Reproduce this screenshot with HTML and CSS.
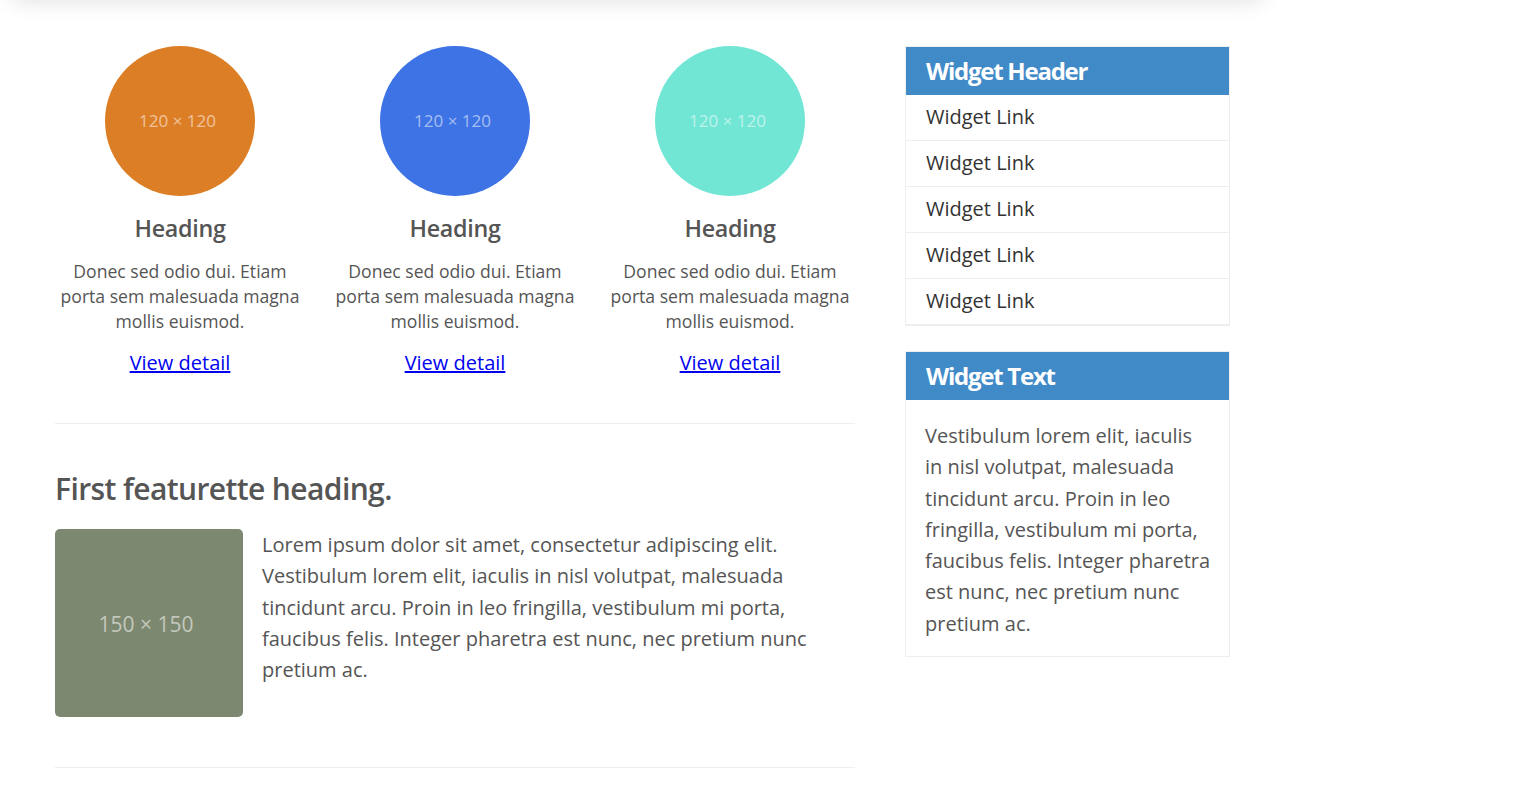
FILE: index.html
```html
<!DOCTYPE html>
<html>
<head>
<meta charset="utf-8">
<link rel="stylesheet" href="styles.css">
</head>
<body>
<div class="topbar"></div>
<div class="page">
  <main class="main">
    <div class="cols">
      <div class="col">
        <div class="circle orange">120 × 120</div>
        <h2 class="col-title">Heading</h2>
        <p class="col-text">Donec sed odio dui. Etiam porta sem malesuada magna mollis euismod.</p>
        <a class="col-link" href="#">View detail</a>
      </div>
      <div class="col">
        <div class="circle blue">120 × 120</div>
        <h2 class="col-title">Heading</h2>
        <p class="col-text">Donec sed odio dui. Etiam porta sem malesuada magna mollis euismod.</p>
        <a class="col-link" href="#">View detail</a>
      </div>
      <div class="col">
        <div class="circle teal">120 × 120</div>
        <h2 class="col-title">Heading</h2>
        <p class="col-text">Donec sed odio dui. Etiam porta sem malesuada magna mollis euismod.</p>
        <a class="col-link" href="#">View detail</a>
      </div>
    </div>
    <hr class="divider">
    <section class="featurette">
      <h2 class="feat-title">First featurette heading.</h2>
      <div class="feat-body">
        <div class="square">150 × 150</div>
        <p class="feat-text">Lorem ipsum dolor sit amet, consectetur adipiscing elit. Vestibulum lorem elit, iaculis in nisl volutpat, malesuada tincidunt arcu. Proin in leo fringilla, vestibulum mi porta, faucibus felis. Integer pharetra est nunc, nec pretium nunc pretium ac.</p>
      </div>
    </section>
    <hr class="divider">
  </main>
  <aside class="sidebar">
    <div class="widget">
      <h3 class="widget-head">Widget Header</h3>
      <ul class="widget-list">
        <li><a href="#">Widget Link</a></li>
        <li><a href="#">Widget Link</a></li>
        <li><a href="#">Widget Link</a></li>
        <li><a href="#">Widget Link</a></li>
        <li><a href="#">Widget Link</a></li>
      </ul>
    </div>
    <div class="widget">
      <h3 class="widget-head">Widget Text</h3>
      <p class="widget-text">Vestibulum lorem elit, iaculis in nisl volutpat, malesuada tincidunt arcu. Proin in leo fringilla, vestibulum mi porta, faucibus felis. Integer pharetra est nunc, nec pretium nunc pretium ac.</p>
    </div>
  </aside>
</div>
</body>
</html>
```

FILE: styles.css
```css
* { box-sizing: border-box; }
html, body { margin: 0; padding: 0; background: #fff; }
body {
  font-family: "Open Sans", "Noto Sans", sans-serif;
  color: #555;
  overflow: hidden;
}
.topbar {
  width: 1250px;
  margin-left: 12px;
  height: 20px;
  margin-top: -20px;
  box-shadow: 0 0 22px rgba(0, 0, 0, 0.14);
}
.page {
  display: flex;
  gap: 50px;
  padding: 46px 0 0 55px;
}
.main {
  width: 800px;
  flex: none;
}
.cols {
  display: flex;
  margin: 0 -12.5px;
}
.col {
  width: 275px;
  padding: 0 12.5px;
  display: flex;
  flex-direction: column;
  align-items: center;
  text-align: center;
}
.circle {
  width: 150px;
  height: 150px;
  border-radius: 50%;
  display: flex;
  align-items: center;
  justify-content: center;
  padding: 0 5px 2px 0;
  font-size: 17px;
  color: rgba(255, 255, 255, 0.55);
}
.orange { background: #dc7e26; }
.blue { background: #3d73e4; }
.teal { background: #72e6d5; }
.col-title {
  margin: 16px 0 0;
  font-size: 23.3px;
  font-weight: 600;
  line-height: 32px;
  color: #555;
  letter-spacing: -0.3px;
}
.col-text {
  margin: 15px 0 0;
  font-size: 17.6px;
  line-height: 25px;
  color: #555;
}
.col-link {
  margin-top: 16px;
  font-size: 20px;
  line-height: 26px;
  color: #0000ee;
}
.divider {
  border: 0;
  border-top: 1px solid #eee;
  margin: 0;
}
.cols + .divider { margin-top: 47px; }
.featurette { padding: 44px 0 50px; }
.feat-title {
  margin: 0;
  font-size: 30px;
  font-weight: 600;
  line-height: 42px;
  letter-spacing: -0.6px;
  color: #555;
}
.feat-body {
  display: flex;
  gap: 19px;
  margin-top: 19px;
}
.square {
  width: 188px;
  height: 188px;
  flex: none;
  border-radius: 5px;
  background: #7d8870;
  display: flex;
  align-items: center;
  justify-content: center;
  padding: 2px 6px 0 0;
  color: rgba(255, 255, 255, 0.55);
  font-size: 21px;
}
.feat-text {
  margin: 0;
  font-size: 20px;
  line-height: 31.3px;
  color: #555;
}
.sidebar {
  width: 325px;
  flex: none;
  display: flex;
  flex-direction: column;
  gap: 25px;
}
.widget {
  border: 1px solid #eee;
}
.widget-head {
  margin: 0;
  background: #418ac8;
  color: #fff;
  font-size: 24px;
  font-weight: 700;
  letter-spacing: -1.25px;
  line-height: 47px;
  padding: 0 20px 1px;
}
.widget-list {
  list-style: none;
  margin: 0;
  padding: 0;
}
.widget-list li {
  border-bottom: 1px solid #eee;
}
.widget-list a {
  display: block;
  padding: 0 20px 1px;
  line-height: 44px;
  font-size: 20px;
  color: #333;
  text-decoration: none;
}
.widget-text {
  margin: 0;
  padding: 20px 16px 17px 19px;
  font-size: 20px;
  line-height: 31.3px;
  color: #555;
}
```
